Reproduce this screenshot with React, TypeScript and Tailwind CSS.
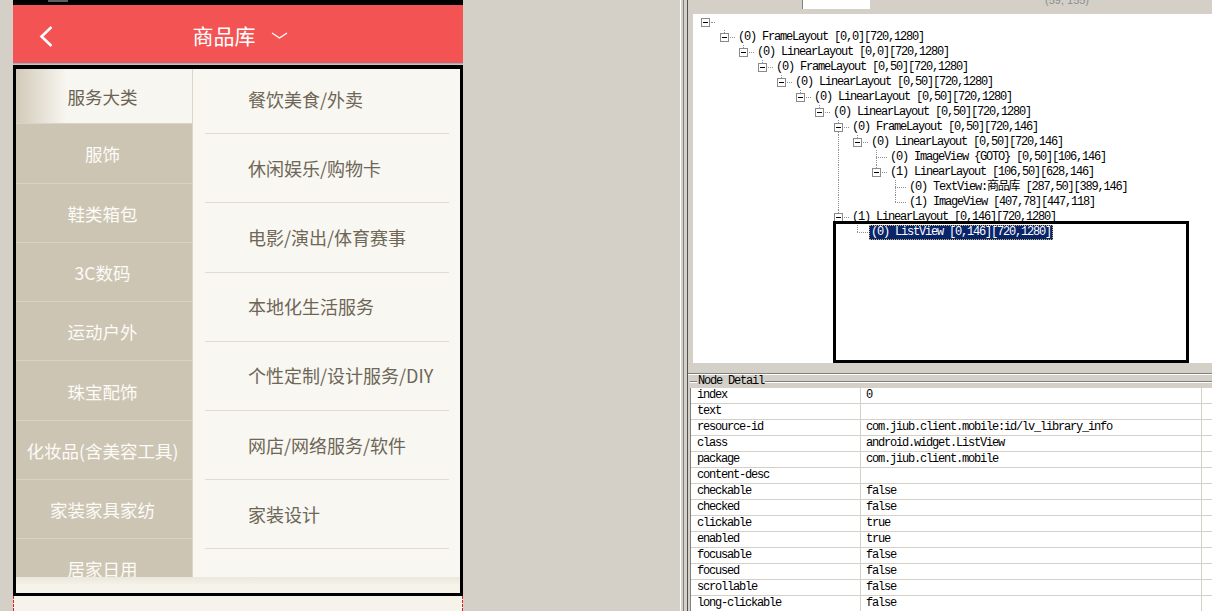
import React from 'react';

const LEFT_ITEMS = ['服务大类', '服饰', '鞋类箱包', '3C数码', '运动户外', '珠宝配饰', '化妆品(含美容工具)', '家装家具家纺', '居家日用'];
const RIGHT_ITEMS = ['餐饮美食/外卖', '休闲娱乐/购物卡', '电影/演出/体育赛事', '本地化生活服务', '个性定制/设计服务/DIY', '网店/网络服务/软件', '家装设计'];

type TreeRow = {
  level: number;
  kind: 'btn' | 'leaf';
  text: string;
  guides?: number[];
  more?: boolean;
  sel?: boolean;
  root?: boolean;
};

const TREE: TreeRow[] = [
  { level: 0, kind: 'btn', text: '', root: true },
  { level: 1, kind: 'btn', text: '(0) FrameLayout [0,0][720,1280]' },
  { level: 2, kind: 'btn', text: '(0) LinearLayout [0,0][720,1280]' },
  { level: 3, kind: 'btn', text: '(0) FrameLayout [0,50][720,1280]' },
  { level: 4, kind: 'btn', text: '(0) LinearLayout [0,50][720,1280]' },
  { level: 5, kind: 'btn', text: '(0) LinearLayout [0,50][720,1280]' },
  { level: 6, kind: 'btn', text: '(0) LinearLayout [0,50][720,1280]' },
  { level: 7, kind: 'btn', text: '(0) FrameLayout [0,50][720,146]', more: true },
  { level: 8, kind: 'btn', text: '(0) LinearLayout [0,50][720,146]', guides: [7] },
  { level: 9, kind: 'leaf', text: '(0) ImageView {GOTO} [0,50][106,146]', guides: [7], more: true },
  { level: 9, kind: 'btn', text: '(1) LinearLayout [106,50][628,146]', guides: [7] },
  { level: 10, kind: 'leaf', text: '(0) TextView:商品库 [287,50][389,146]', guides: [7], more: true },
  { level: 10, kind: 'leaf', text: '(1) ImageView [407,78][447,118]', guides: [7] },
  { level: 7, kind: 'btn', text: '(1) LinearLayout [0,146][720,1280]' },
  { level: 8, kind: 'leaf', text: '(0) ListView [0,146][720,1280]', sel: true },
];

const DETAILS: [string, string][] = [
  ['index', '0'],
  ['text', ''],
  ['resource-id', 'com.jiub.client.mobile:id/lv_library_info'],
  ['class', 'android.widget.ListView'],
  ['package', 'com.jiub.client.mobile'],
  ['content-desc', ''],
  ['checkable', 'false'],
  ['checked', 'false'],
  ['clickable', 'true'],
  ['enabled', 'true'],
  ['focusable', 'false'],
  ['focused', 'false'],
  ['scrollable', 'false'],
  ['long-clickable', 'false'],
];

const MONO = "font-['Liberation_Mono','Noto_Sans_CJK_SC',monospace] text-[12px] tracking-[-1.2px]";

function TreeLine({ row }: { row: TreeRow }) {
  const guides = row.guides ?? [];
  return (
    <div className="flex h-[15px] items-center">
      {Array.from({ length: row.level }).map((_, j) => (
        <div key={j} className="h-full w-[19px] shrink-0">
          {guides.includes(j) && <div className="ml-[8px] h-full border-l border-dotted border-[#909090]" />}
        </div>
      ))}
      {row.kind === 'btn' ? (
        <div className="flex h-full w-[19px] shrink-0 flex-col">
          <div className={`ml-[8px] h-[3px] ${row.root ? '' : 'border-l border-dotted border-[#909090]'}`} />
          <div className="flex h-[9px] items-center">
            <div className="ml-[4px] flex h-[9px] w-[9px] shrink-0 items-center justify-center border border-[#8a8a8a] bg-white">
              <div className="h-[1px] w-[5px] bg-black" />
            </div>
            <div className={`ml-[1px] h-0 border-t border-dotted border-[#909090] ${row.root ? 'w-[4px]' : 'w-[6px]'}`} />
          </div>
          <div className={`ml-[8px] h-[3px] ${row.more ? 'border-l border-dotted border-[#909090]' : ''}`} />
        </div>
      ) : (
        <div className="flex h-full w-[19px] shrink-0 flex-col">
          <div className="ml-[8px] h-[7px] border-l border-dotted border-[#909090]" />
          <div className="ml-[8px] h-0 w-[11px] border-t border-dotted border-[#909090]" />
          <div className={`ml-[8px] h-[8px] ${row.more ? 'border-l border-dotted border-[#909090]' : ''}`} />
        </div>
      )}
      {row.text &&
        (row.sel ? (
          <span className={`${MONO} ml-[1px] whitespace-pre border border-dotted border-[#c8b070] bg-[#0a246a] px-[1px] leading-[13px] text-white`}>
            {row.text}
          </span>
        ) : (
          <span className={`${MONO} ml-[3px] whitespace-pre leading-[15px] text-black`}>{row.text}</span>
        ))}
    </div>
  );
}

export default function App() {
  return (
    <div className="flex h-[611px] w-[1212px] overflow-hidden bg-[#d4d0c8]">
      <div className="w-[13px] shrink-0" />

      {/* Phone screenshot */}
      <div className="flex w-[450px] shrink-0 flex-col font-['Noto_Sans_CJK_SC','Noto_Sans',sans-serif]">
        <div className="h-[5px] shrink-0 bg-black">
          <div className="ml-[35px] h-[2px] w-[20px] bg-[#5e5e5e]" />
        </div>
        <div className="flex h-[58px] shrink-0 items-center bg-[#f45353]">
          <div className="flex h-full w-[66px] items-center justify-center pt-[4px]">
            <svg width="14" height="21" viewBox="0 0 14 21">
              <polyline points="12.5,1 2.5,10.5 12.5,20" fill="none" stroke="white" strokeWidth="2.6" strokeLinejoin="miter" />
            </svg>
          </div>
          <div className="flex w-[326px] items-center justify-center gap-[11px] pt-[2px]">
            <span className="w-[64px] text-center text-[21px] leading-none text-white">商品库</span>
            <div className="flex w-[25px] justify-center">
              <svg width="17" height="7" viewBox="0 0 17 7">
                <polyline points="1,1 8.5,6 16,1" fill="none" stroke="white" strokeWidth="1.4" />
              </svg>
            </div>
          </div>
        </div>
        <div className="h-[1px] shrink-0 bg-[#8fb2c6]" />
        <div className="h-[1px] shrink-0 bg-[#c9c5bc]" />

        <div className="relative flex flex-1 flex-col">
          <div className="flex h-[512px] shrink-0 overflow-hidden">
            <div className="flex w-[180px] shrink-0 flex-col border-r border-[#dcd5c8] bg-[#cdc5b4]">
              {LEFT_ITEMS.map((t, i) => (
                <div
                  key={t}
                  className={`flex h-[59.3px] shrink-0 items-center justify-center border-b border-[#dad3c5] text-[17.5px] ${
                    i === 0
                      ? 'bg-[linear-gradient(to_right,#d0c8b6,#f8f6f0_30%)] pt-[5px] text-[#6b6353]'
                      : 'pt-[2px] text-[#fcfbf7]'
                  }`}
                >
                  {t}
                </div>
              ))}
            </div>
            <div className="flex flex-1 flex-col bg-[#f8f7f2]">
              {RIGHT_ITEMS.map((t) => (
                <div key={t} className="flex h-[69.2px] shrink-0 flex-col">
                  <div className="flex flex-1 items-center pl-[55px] text-[18px] text-[#6e6656]">{t}</div>
                  <div className="ml-[12px] mr-[14px] h-[1px] bg-[#e0dcd3]" />
                </div>
              ))}
            </div>
          </div>
          <div className="h-[19px] shrink-0 bg-[linear-gradient(#ebe7dc,#f6f3ea_45%)]" />
          <div className="flex-1 border-x border-dashed border-[#e02020] bg-[#f6f3ea]" />
          <div className="pointer-events-none absolute inset-x-0 top-0 h-[531px] border-[3px] border-t-4 border-black" />
        </div>
      </div>

      <div className="w-[217px] shrink-0" />

      {/* UI Automator viewer side */}
      <div className="flex flex-1">
        <div className="w-[1px] bg-white" />
        <div className="w-[2px]" />
        <div className="w-[1px] bg-[#808080]" />
        <div className="w-[3px]" />
        <div className="w-[1px] bg-[#505050]" />
        <div className="flex flex-1 flex-col">
          {/* top strip */}
          <div className="flex h-[14px] shrink-0 items-start">
            <div className="ml-[114px] h-[9px] w-[68px] border-l border-[#808080] bg-white" />
            <span className="-mt-[5px] ml-[175px] font-['Liberation_Sans',sans-serif] text-[11px] leading-[11px] text-[#8c8c8c]">
              (59, 155)
            </span>
          </div>

          {/* tree */}
          <div className="relative ml-[5px] h-[349px] shrink-0 overflow-hidden bg-white pl-[4px] pt-[1px]">
            {TREE.map((r, i) => (
              <TreeLine key={i} row={r} />
            ))}
            <div className="pointer-events-none absolute left-[140px] top-[207px] h-[142px] w-[356px] border-[3px] border-black" />
          </div>

          <div className="h-[10px] shrink-0" />
          <div className="h-[1px] shrink-0 bg-[#808080]" />
          <div className="h-[1px] shrink-0 bg-white" />

          {/* node detail */}
          <div className="ml-[2px] flex flex-1 flex-col">
            <div className="flex h-[13px] shrink-0 items-center">
              <div className="h-[2px] w-[7px] border-t border-[#808080] bg-white" />
              <span className={`${MONO} px-[1px] leading-[13px] text-black`}>Node Detail</span>
              <div className="h-[2px] flex-1 border-t border-[#808080] bg-white" />
            </div>
            <div className="flex flex-1 flex-col border-l border-[#808080] bg-white">
              {DETAILS.map(([k, v]) => (
                <div key={k} className="flex h-[16px] shrink-0 border-b border-[#d4d0c8]">
                  <div className={`${MONO} w-[170px] shrink-0 whitespace-pre border-r border-[#d4d0c8] pl-[6px] leading-[15px] text-black`}>
                    {k}
                  </div>
                  <div className={`${MONO} w-[341px] shrink-0 whitespace-pre border-r border-[#d4d0c8] pl-[5px] leading-[15px] text-black`}>
                    {v}
                  </div>
                  <div className="flex-1" />
                </div>
              ))}
            </div>
          </div>
        </div>
      </div>
    </div>
  );
}
